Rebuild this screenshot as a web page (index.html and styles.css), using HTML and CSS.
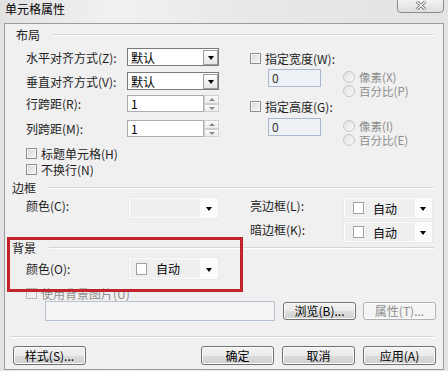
FILE: index.html
```html
<!DOCTYPE html>
<html lang="zh-CN">
<head>
  <meta charset="UTF-8">
  <title>单元格属性</title>
  <link rel="stylesheet" href="styles.css">
</head>
<body>
  <div class="window">
    <div class="titlebar">
      <span class="title">单元格属性</span>
      <div class="close">
        <svg width="12" height="9" viewBox="0 0 12 9">
          <path d="M1.5 0.5 L10.5 8.5 M10.5 0.5 L1.5 8.5" stroke="#6b6b6b" stroke-width="3" fill="none"/>
          <path d="M1.5 0.5 L10.5 8.5 M10.5 0.5 L1.5 8.5" stroke="#ffffff" stroke-width="1.2" fill="none"/>
        </svg>
      </div>
    </div>

    <div class="client">
      <!-- 布局 -->
      <section class="group group-layout">
        <div class="group-head head-layout"><span>布局</span><i class="rule"></i></div>
        <div class="cols">
          <div class="col-left">
            <div class="row row-first">
              <span class="lbl">水平对齐方式(Z):</span>
              <div class="select"><span>默认</span><span class="drop"><i class="tri"></i></span></div>
            </div>
            <div class="row row-second">
              <span class="lbl">垂直对齐方式(V):</span>
              <div class="select"><span>默认</span><span class="drop"><i class="tri"></i></span></div>
            </div>
            <div class="row row-span1">
              <span class="lbl">行跨距(R):</span>
              <div class="spin-field">
                <span class="spin-input">1</span>
                <span class="spin"><i class="up"></i><i class="down"></i></span>
              </div>
            </div>
            <div class="row row-span2">
              <span class="lbl">列跨距(M):</span>
              <div class="spin-field">
                <span class="spin-input">1</span>
                <span class="spin"><i class="up"></i><i class="down"></i></span>
              </div>
            </div>
            <label class="check check-first"><i class="box"></i>标题单元格(H)</label>
            <label class="check"><i class="box"></i>不换行(N)</label>
          </div>

          <div class="col-right">
            <label class="check check-size"><i class="box"></i>指定宽度(W):</label>
            <div class="size-row">
              <span class="size-input">0</span>
              <div class="radios">
                <span class="radio"><i class="dot"></i>像素(X)</span>
                <span class="radio"><i class="dot"></i>百分比(P)</span>
              </div>
            </div>
            <label class="check check-height"><i class="box"></i>指定高度(G):</label>
            <div class="size-row size-row-2">
              <span class="size-input">0</span>
              <div class="radios">
                <span class="radio"><i class="dot"></i>像素(I)</span>
                <span class="radio"><i class="dot"></i>百分比(E)</span>
              </div>
            </div>
          </div>
        </div>
      </section>

      <!-- 边框 -->
      <section class="group group-border">
        <div class="group-head"><span>边框</span><i class="rule"></i></div>
        <div class="cols">
          <div class="col-left">
            <div class="row row-color">
              <span class="lbl lbl-color">颜色(C):</span>
              <div class="colorbox"><span class="face"></span><span class="arrow"><i class="tri"></i></span></div>
            </div>
          </div>
          <div class="col-right">
            <div class="row row-color">
              <span class="lbl lbl-edge">亮边框(L):</span>
              <div class="colorbox colorbox-edge"><span class="face"><i class="swatch"></i>自动</span><span class="arrow"><i class="tri"></i></span></div>
            </div>
            <div class="row row-color row-dark">
              <span class="lbl lbl-edge">暗边框(K):</span>
              <div class="colorbox colorbox-edge"><span class="face"><i class="swatch"></i>自动</span><span class="arrow"><i class="tri"></i></span></div>
            </div>
          </div>
        </div>
      </section>

      <!-- 背景 -->
      <section class="group group-bg">
        <div class="group-head"><span>背景</span><i class="rule"></i></div>
        <div class="cols">
          <div class="row row-bgcolor">
            <span class="lbl lbl-color">颜色(O):</span>
            <div class="colorbox colorbox-bg"><span class="face"><i class="swatch"></i>自动</span><span class="arrow"><i class="tri"></i></span></div>
          </div>
        </div>
        <div class="cols">
          <label class="check check-bgimg disabled"><i class="box"></i>使用背景图片(U)</label>
        </div>
        <div class="file-row">
          <span class="file-input"></span>
          <button class="btn btn-browse">浏览(B)...</button>
          <button class="btn btn-prop" disabled>属性(T)...</button>
        </div>
      </section>

      <div class="sep"></div>

      <div class="footer">
        <button class="btn btn-style">样式(S)...</button>
        <div class="footer-right">
          <button class="btn">确定</button>
          <button class="btn">取消</button>
          <button class="btn">应用(A)</button>
        </div>
      </div>
    </div>

    <div class="highlight"></div>
  </div>
</body>
</html>
```

FILE: styles.css
```css
* {
  box-sizing: border-box;
}

body {
  margin: 0;
  font-family: "Noto Sans CJK SC", "Liberation Sans", sans-serif;
  font-size: 12px;
  color: #1e1e1e;
}

.window {
  position: relative;
  width: 448px;
  height: 371px;
  overflow: hidden;
  background: linear-gradient(to right, #e2e2e2, #f1f1f1 25%, #e8e8e8 55%, #e3e3e3);
}

.titlebar {
  height: 23px;
  display: flex;
  justify-content: space-between;
  align-items: flex-start;
}

.title {
  padding: 1px 0 0 5px;
  line-height: 15px;
  color: #000;
}

.close {
  width: 47px;
  height: 16px;
  margin-top: -3px;
  margin-right: 4px;
  border: 1px solid #8d8d8d;
  border-radius: 0 0 4px 4px;
  background: linear-gradient(#f6f6f6, #dedede);
  display: flex;
  justify-content: center;
  padding-top: 3px;
}

.client {
  margin-left: 4px;
  width: 440px;
  height: 347px;
  border: 1px solid #9c9c9c;
  background: #f0f0f0;
  display: flex;
  flex-direction: column;
}

/* group boxes */
.group-head {
  display: flex;
  align-items: center;
  height: 14px;
  padding-left: 7px;
  line-height: 14px;
}

.head-layout {
  margin-top: 4px;
  padding-left: 11px;
}

.rule {
  flex: 1;
  height: 2px;
  margin: 0 9px 0 13px;
  border-top: 1px solid #d5d5d5;
  border-bottom: 1px solid #ffffff;
}

.cols {
  display: flex;
  padding-left: 21px;
}

.col-left {
  width: 224px;
}

.col-right {
  flex: 1;
}

.row {
  display: flex;
  align-items: center;
}

.lbl {
  width: 101px;
  white-space: nowrap;
}

.row-first { margin-top: 6px; }
.row-second { margin-top: 6px; }
.row-span1 { margin-top: 5px; }
.row-span2 { margin-top: 8px; }

/* select */
.select {
  width: 92px;
  height: 18px;
  border: 1px solid #7a7a7a;
  background: #fff;
  display: flex;
  align-items: center;
  padding-left: 3px;
  color: #000;
}

.drop {
  margin-left: auto;
  width: 15px;
  height: 15px;
  border: 1px solid #9d9d9d;
  background: linear-gradient(#ffffff, #e4e4e4);
  display: flex;
  justify-content: center;
  align-items: center;
  padding-top: 2px;
}

.tri {
  width: 0;
  height: 0;
  border-left: 3px solid transparent;
  border-right: 3px solid transparent;
  border-top: 4px solid #000;
}

/* spinner */
.spin-field {
  display: flex;
  height: 17px;
}

.spin-input {
  width: 77px;
  border: 1px solid #abadb3;
  background: #fff;
  padding-left: 3px;
  line-height: 15px;
  color: #000;
}

.spin {
  width: 15px;
  display: flex;
  flex-direction: column;
}

.spin i {
  flex: 1;
  border: 1px solid #d0d0d0;
  background: linear-gradient(#fbfbfb, #ececec);
  position: relative;
}

.spin .up::after,
.spin .down::after {
  content: "";
  position: absolute;
  left: 4px;
  top: 2px;
  border-left: 3px solid transparent;
  border-right: 3px solid transparent;
}

.spin .up::after {
  border-bottom: 3px solid #8a8a8a;
}

.spin .down::after {
  border-top: 3px solid #8a8a8a;
}

/* checkbox */
.check {
  display: flex;
  align-items: center;
  height: 16px;
  white-space: nowrap;
}

.check-first {
  margin-top: 8px;
}

.box {
  width: 11px;
  height: 11px;
  margin-right: 4px;
  border: 1px solid #8f8f8f;
  background: linear-gradient(135deg, #d6d6d6, #f7f7f7);
  box-shadow: inset 0 0 0 1px #f4f4f4;
}

.disabled {
  color: #8e8e8e;
}

.disabled .box {
  border-color: #b8b8b8;
  background: linear-gradient(135deg, #e4e4e4, #f8f8f8);
}

/* size controls */
.check-size {
  margin-top: 8px;
}

.check-height {
  margin-top: 0;
}

.size-row {
  display: flex;
  align-items: flex-start;
  margin-top: 3px;
}

.size-row-2 {
  margin-top: 4px;
}

.size-input {
  margin-left: 18px;
  width: 53px;
  height: 18px;
  border: 1px solid #a9b8cc;
  background: #eef1f5;
  padding-left: 3px;
  line-height: 16px;
  color: #333;
}

.radios {
  margin-left: 22px;
  margin-top: 1px;
  display: flex;
  flex-direction: column;
  color: #8e8e8e;
}

.radio {
  display: flex;
  align-items: center;
  height: 14px;
  line-height: 14px;
  font-size: 11.5px;
  white-space: nowrap;
}

.dot {
  width: 12px;
  height: 12px;
  margin-right: 4px;
  border: 1px solid #c6c6c6;
  border-radius: 50%;
  background: linear-gradient(135deg, #e2e2e2, #f8f8f8);
}

/* color combos */
.group-border {
  margin-top: 4px;
}

.row-color {
  align-items: flex-start;
  margin-top: 2px;
}

.lbl-color {
  width: 102px;
  line-height: 18px;
}

.lbl-edge {
  width: 93px;
  line-height: 18px;
}

.colorbox {
  width: 91px;
  height: 22px;
  display: flex;
  background: #fcfcfc;
  border: 1px solid #e9e9e9;
  padding: 1px;
}

.colorbox-edge {
  width: 90px;
}

.face {
  width: 70px;
  background: #efefef;
  display: flex;
  align-items: center;
  padding-left: 8px;
  color: #000;
}

.colorbox-bg {
  height: 23px;
}

.colorbox-bg .face {
  padding-left: 6px;
}

.swatch {
  width: 11px;
  height: 12px;
  margin-right: 9px;
  border: 1px solid #a0a0a0;
  background: #fff;
}

.arrow {
  flex: 1;
  display: flex;
  justify-content: center;
  align-items: center;
  padding-top: 2px;
}

/* background */
.group-bg {
  margin-top: -2px;
}

.row-bgcolor {
  margin-top: 2px;
}

.check-bgimg {
  margin-top: 5px;
}

.file-row {
  display: flex;
  align-items: center;
  padding-left: 40px;
}

.file-input {
  width: 230px;
  height: 20px;
  border: 1px solid #b5c2d2;
  background: #f4f4f4;
}

.btn {
  width: 73px;
  height: 19px;
  padding: 0;
  border: 1px solid #707070;
  border-radius: 3px;
  background: linear-gradient(#f2f2f2 0%, #ebebeb 50%, #dddddd 51%, #cfcfcf 100%);
  box-shadow: inset 0 0 0 1px #fbfbfb;
  font-family: inherit;
  font-size: 12px;
  line-height: 16px;
  color: #000;
}

.btn-browse {
  height: 18px;
  margin-left: 8px;
}

.btn-prop {
  height: 18px;
  margin-left: 7px;
  border-color: #adb2b5;
  background: #f4f4f4;
  color: #8e8e8e;
}

.sep {
  margin: 15px 9px 0 5px;
  height: 2px;
  border-top: 1px solid #d5d5d5;
  border-bottom: 1px solid #fff;
}

.footer {
  display: flex;
  justify-content: space-between;
  margin-top: 8px;
  padding: 0 7px 0 8px;
}

.footer-right {
  display: flex;
  gap: 8px;
}

.highlight {
  position: absolute;
  left: 7px;
  top: 237px;
  width: 236px;
  height: 55px;
  border: 3px solid #c1252b;
}
```
